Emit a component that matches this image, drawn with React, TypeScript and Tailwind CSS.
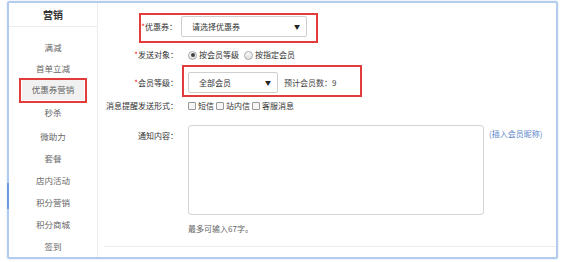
const font = { fontFamily: '"Noto Sans CJK SC", "Noto Sans", sans-serif' };

const navItems = [
  { label: "满减", h: "h-[21px]" },
  { label: "首单立减", h: "h-[20px]" },
  { label: "优惠券营销", h: "h-[22px]", active: true },
  { label: "秒杀", h: "h-[25px]" },
  { label: "微助力", h: "h-[23px]" },
  { label: "套餐", h: "h-[21px]" },
  { label: "店内活动", h: "h-[22px]" },
  { label: "积分营销", h: "h-[23px]" },
  { label: "积分商城", h: "h-[21px]" },
  { label: "签到", h: "h-[22px]" },
];

function Label({ text, star = true, w = "w-[80px]" }: { text: string; star?: boolean; w?: string }) {
  return (
    <div className={`${w} shrink-0 text-right text-[#333]`}>
      {star ? <span className="text-[#e22]">*</span> : null}
      {text}
    </div>
  );
}

function Select({ value, w }: { value: string; w: string }) {
  return (
    <div
      className={`${w} flex h-[21px] items-center justify-between rounded-[2px] border border-[#cfcfcf] bg-white pl-[10px] pr-[6px] text-[#333]`}
    >
      <span>{value}</span>
      <span className="text-[6px] text-[#222]">▼</span>
    </div>
  );
}

function Radio({ checked }: { checked?: boolean }) {
  return (
    <span className="mr-[2px] inline-flex h-[9px] w-[9px] items-center justify-center rounded-full border border-[#aaa] bg-gradient-to-b from-[#fafafa] to-[#ddd]">
      {checked ? <span className="h-[4px] w-[4px] rounded-full bg-[#444]" /> : null}
    </span>
  );
}

function Check() {
  return <span className="mr-[2px] inline-block h-[8px] w-[8px] rounded-[1px] border border-[#999] bg-[#f6f6f6]" />;
}

export default function App() {
  return (
    <div className="relative h-[262px] w-[563px] overflow-hidden bg-white text-[8px] leading-none" style={font}>
      <div className="ml-[7px] mt-[1px] flex h-[258px] w-[551px] rounded-[2px] border-2 border-[#b2cbee] shadow-[0_0_2px_#c9dbf3]">
        {/* sidebar */}
        <div className="flex w-[89px] shrink-0 flex-col border-r border-[#ececec] text-[8.5px]">
          <div className="flex h-[28px] items-center justify-center border-b border-[#ececec] text-[10px] font-bold text-[#333]">
            营销
          </div>
          <div className="flex flex-col pt-[10px]">
            {navItems.map((n) => (
              <div
                key={n.label}
                className={`${n.h} flex items-center justify-center text-[#666]`}
              >
                {n.active ? (
                  <span className="flex h-[21px] w-[62px] items-center justify-center bg-[#f1f1f1]">{n.label}</span>
                ) : (
                  n.label
                )}
              </div>
            ))}
          </div>
        </div>

        {/* main */}
        <div className="flex flex-1 flex-col">
          <div className="mt-[13px] flex items-center">
            <Label text="优惠券：" w="w-[79px]" />
            <div className="ml-[4px]">
              <Select value="请选择优惠券" w="w-[126px]" />
            </div>
          </div>

          <div className="mt-[11px] flex h-[14px] items-center">
            <Label text="发送对象：" />
            <div className="ml-[10px] flex items-center text-[#333]">
              <Radio checked />
              <span className="mr-[5px]">按会员等级</span>
              <Radio />
              <span>按指定会员</span>
            </div>
          </div>

          <div className="mt-[10px] flex items-center">
            <Label text="会员等级：" />
            <div className="ml-[10px] flex items-center">
              <Select value="全部会员" w="w-[90px]" />
              <span className="ml-[6px] text-[#444]">预计会员数：9</span>
            </div>
          </div>

          <div className="mt-[7px] flex h-[12px] items-center">
            <Label text="消息提醒发送形式：" star={false} />
            <div className="ml-[10px] flex items-center text-[#333]">
              <Check />
              <span className="mr-[2px]">短信</span>
              <Check />
              <span className="mr-[2px]">站内信</span>
              <Check />
              <span>客服消息</span>
            </div>
          </div>

          <div className="mt-[13px] flex items-start">
            <div className="pt-[7px]">
              <Label text="通知内容：" star={false} />
            </div>
            <div className="ml-[10px] h-[90px] w-[296px] rounded-[3px] border border-[#d4d4d4] bg-white" />
            <div className="ml-[5px] pt-[5px] text-[#5b86c8]">(插入会员昵称)</div>
          </div>

          <div className="ml-[90px] mt-[10px] text-[#666]">最多可输入67字。</div>

          <div className="ml-[6px] mt-[13px] border-b border-[#ececec]" />
        </div>
      </div>

      {/* left accent on sidebar */}
      <div className="absolute left-[7px] top-[183px] h-[26px] w-[2px] bg-[#6d9be0]" />

      {/* annotation boxes */}
      <div className="absolute left-[19px] top-[78px] h-[25px] w-[68px] border-2 border-[#e23b3b]" />
      <div className="absolute left-[139px] top-[13px] h-[30px] w-[179px] border-2 border-[#e23b3b]" />
      <div className="absolute left-[182px] top-[65px] h-[32px] w-[180px] border-2 border-[#e23b3b]" />
    </div>
  );
}
